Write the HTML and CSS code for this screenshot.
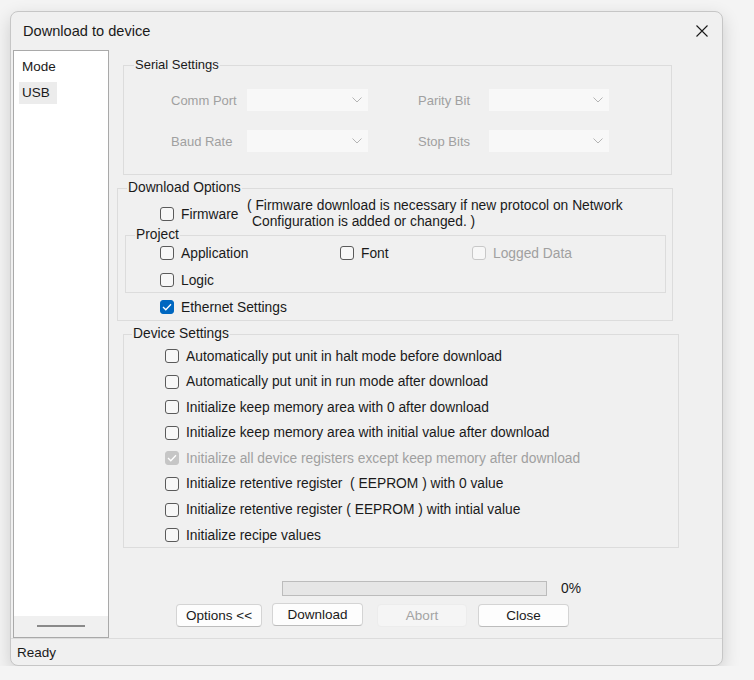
FILE: index.html
```html
<!DOCTYPE html>
<html>
    <head>
        <meta charset="UTF-8">
        <meta name="viewport" content="width=device-width, initial-scale=1.0">
        <title>Download to device</title>
        <link rel="stylesheet" href="styles.css">
    </head>
    <body>
        <div class="window">
            <div class="titlebar">
                <span class="title">Download to device</span>
                <span class="close">
                    <svg width="12" height="12" viewBox="0 0 12 12"><path d="M0.5 0.5L11.5 11.5M11.5 0.5L0.5 11.5" stroke="#1a1a1a" stroke-width="1.1" fill="none"/></svg>
                </span>
            </div>

            <div class="main">
                <div class="sidebar">
                    <div class="list">
                        <div class="item">Mode</div>
                        <div class="item selected">USB</div>
                    </div>
                    <div class="hscroll"><span class="thumb"></span></div>
                </div>

                <div class="content">
                    <fieldset class="group serial">
                        <legend>Serial Settings</legend>
                        <div class="serial-grid">
                            <span class="lbl">Comm Port</span>
                            <span class="combo"><svg width="10" height="6" viewBox="0 0 10 6"><polyline points="0.5,0.5 5,5 9.5,0.5" stroke="#b4b4b4" fill="none"/></svg></span>
                            <span></span>
                            <span class="lbl">Parity Bit</span>
                            <span class="combo"><svg width="10" height="6" viewBox="0 0 10 6"><polyline points="0.5,0.5 5,5 9.5,0.5" stroke="#b4b4b4" fill="none"/></svg></span>

                            <span class="lbl">Baud Rate</span>
                            <span class="combo"><svg width="10" height="6" viewBox="0 0 10 6"><polyline points="0.5,0.5 5,5 9.5,0.5" stroke="#b4b4b4" fill="none"/></svg></span>
                            <span></span>
                            <span class="lbl">Stop Bits</span>
                            <span class="combo"><svg width="10" height="6" viewBox="0 0 10 6"><polyline points="0.5,0.5 5,5 9.5,0.5" stroke="#b4b4b4" fill="none"/></svg></span>
                        </div>
                    </fieldset>

                    <fieldset class="group options">
                        <legend>Download Options</legend>
                        <div class="firmware-row">
                            <label class="check fw"><span class="box"></span>Firmware</label>
                            <div class="note">( Firmware download is necessary if new protocol on Network<br>Configuration is added or changed. )</div>
                        </div>

                        <fieldset class="group project">
                            <legend>Project</legend>
                            <div class="project-grid">
                                <label class="check"><span class="box"></span>Application</label>
                                <label class="check"><span class="box"></span>Font</label>
                                <label class="check disabled"><span class="box"></span>Logged Data</label>
                                <label class="check"><span class="box"></span>Logic</label>
                            </div>
                        </fieldset>

                        <label class="check ethernet"><span class="box on"><svg width="10" height="8" viewBox="0 0 10 8"><polyline points="1,4 3.8,6.8 9,1.2" stroke="#fff" stroke-width="1.3" fill="none"/></svg></span>Ethernet Settings</label>
                    </fieldset>

                    <fieldset class="group device">
                        <legend>Device Settings</legend>
                        <div class="device-list">
                            <label class="check"><span class="box"></span>Automatically put unit in halt mode before download</label>
                            <label class="check"><span class="box"></span>Automatically put unit in run mode after download</label>
                            <label class="check"><span class="box"></span>Initialize keep memory area with 0 after download</label>
                            <label class="check"><span class="box"></span>Initialize keep memory area with initial value after download</label>
                            <label class="check disabled"><span class="box on"><svg width="10" height="8" viewBox="0 0 10 8"><polyline points="1,4 3.8,6.8 9,1.2" stroke="#fff" stroke-width="1.3" fill="none"/></svg></span>Initialize all device registers except keep memory after download</label>
                            <label class="check"><span class="box"></span>Initialize retentive register &nbsp;( EEPROM ) with 0 value</label>
                            <label class="check"><span class="box"></span>Initialize retentive register ( EEPROM ) with intial value</label>
                            <label class="check"><span class="box"></span>Initialize recipe values</label>
                        </div>
                    </fieldset>

                    <div class="progress-row">
                        <div class="progress"></div>
                        <span class="percent">0%</span>
                    </div>

                    <div class="buttons">
                        <button type="button" class="btn options-btn">Options &lt;&lt;</button>
                        <button type="button" class="btn download-btn">Download</button>
                        <button type="button" class="btn abort-btn" disabled>Abort</button>
                        <button type="button" class="btn close-btn">Close</button>
                    </div>
                </div>
            </div>

            <div class="statusbar">Ready</div>
        </div>
    </body>
</html>
```

FILE: styles.css
```css
*{
    box-sizing: border-box;
}
body{
    margin: 0;
    padding: 11px 0 0 10px;
    background-color: #f4f4f4;
    font-family: "Liberation Sans", Arial, sans-serif;
    font-size: 13px;
    color: #1a1a1a;
}
.window{
    width: 713px;
    height: 655px;
    display: flex;
    flex-direction: column;
    background-color: #f0f0f0;
    border: 1px solid #c6c6c6;
    border-radius: 8px;
    overflow: hidden;
    box-shadow: 0 6px 18px rgba(0, 0, 0, 0.16);
}
.titlebar{
    height: 38px;
    display: flex;
    align-items: center;
    justify-content: space-between;
    padding: 0 14px 0 12px;
    flex-shrink: 0;
}
.title{
    font-size: 14.6px;
}
.close{
    display: flex;
}
.main{
    height: 588px;
    display: flex;
    flex-shrink: 0;
}

/* left list */
.sidebar{
    width: 96px;
    margin-left: 2px;
    display: flex;
    flex-direction: column;
    background-color: #ffffff;
    border: 1px solid #a9a9a9;
}
.list{
    flex: 1;
    padding-top: 5px;
    font-size: 13.5px;
}
.item{
    width: 38px;
    height: 22px;
    line-height: 22px;
    margin: 0 0 4px 5px;
    padding-left: 3px;
}
.selected{
    background-color: #ececec;
}
.hscroll{
    height: 21px;
    background-color: #f0f0f0;
    display: flex;
    justify-content: center;
    padding-top: 9px;
}
.thumb{
    width: 48px;
    height: 2px;
    background-color: #8a8a8a;
}

/* group boxes */
.content{
    flex: 1;
    font-size: 13.8px;
}
.group{
    margin: 0;
    padding: 0;
    min-width: 0;
    border: 1px solid #dcdcdc;
}
.group legend{
    padding: 0 1px;
    line-height: 16px;
}
.serial{
    width: 549px;
    margin: 7px 0 0 14px;
    font-size: 13px;
}
.serial legend{
    margin-left: 10px;
}
.serial-grid{
    display: grid;
    grid-template-columns: 76px 121px 50px 71px 120px;
    grid-auto-rows: 22px;
    row-gap: 19px;
    align-items: center;
    padding: 16px 0 22px 47px;
}
.lbl{
    color: #a0a0a0;
}
.combo{
    height: 22px;
    background-color: #f8f8f8;
    display: flex;
    align-items: center;
    justify-content: flex-end;
    padding-right: 6px;
}

.options{
    width: 556px;
    margin: 5px 0 0 8px;
    padding-bottom: 3px;
}
.options legend{
    margin-left: 9px;
}
.firmware-row{
    display: flex;
    align-items: center;
    margin-top: 2px;
    padding-left: 42px;
    height: 32px;
}
.fw{
    width: 87px;
}
.note{
    line-height: 16px;
    padding-left: 5px;
    text-indent: -5px;
}
.project{
    width: 541px;
    margin: -3px 0 0 7px;
}
.project legend{
    margin-left: 9px;
}
.project-grid{
    display: grid;
    grid-template-columns: 180px 132px auto;
    row-gap: 7px;
    padding: 0 0 2px 34px;
}
.ethernet{
    margin-top: 4px;
    padding-left: 42px;
}

.device{
    width: 556px;
    margin: 5px 0 0 14px;
}
.device legend{
    margin-left: 8px;
}
.device-list{
    display: flex;
    flex-direction: column;
    gap: 5.6px;
    padding: 4px 0 2px 41px;
}

/* checkboxes */
.check{
    display: flex;
    align-items: center;
    gap: 7px;
    height: 20px;
}
.box{
    width: 14px;
    height: 14px;
    flex-shrink: 0;
    border: 1px solid #5a5a5a;
    border-radius: 3px;
    background-color: #f7f7f7;
    display: flex;
    align-items: center;
    justify-content: center;
}
.box.on{
    background-color: #0067c0;
    border-color: #0067c0;
}
.disabled{
    color: #a0a0a0;
}
.disabled .box{
    border-color: #c8c8c8;
}
.disabled .box.on{
    background-color: #c6c6c6;
    border-color: #c6c6c6;
}

/* progress + buttons */
.progress-row{
    display: flex;
    align-items: center;
    margin: 33px 0 0 173px;
}
.progress{
    width: 265px;
    height: 15px;
    border: 1px solid #bcbcbc;
    background-color: #e6e6e6;
}
.percent{
    margin-left: 14px;
}
.buttons{
    display: flex;
    margin: 8px 0 0 67px;
}
.btn{
    height: 23px;
    padding: 0;
    font-family: "Liberation Sans", Arial, sans-serif;
    font-size: 13.5px;
    color: #1a1a1a;
    background-color: #fdfdfd;
    border: 1px solid #d4d4d4;
    border-bottom-color: #bcbcbc;
    border-radius: 4px;
}
.options-btn{
    width: 86px;
}
.download-btn{
    width: 91px;
    margin-left: 10px;
    margin-top: -1px;
}
.abort-btn{
    width: 90px;
    margin-left: 14px;
    color: #a3a3a3;
    background-color: #f5f5f5;
    border-color: #ececec;
}
.close-btn{
    width: 91px;
    margin-left: 11px;
}

.statusbar{
    flex: 1;
    display: flex;
    align-items: center;
    padding-left: 6px;
    border-top: 1px solid #dcdcdc;
    font-size: 13.5px;
}
```
